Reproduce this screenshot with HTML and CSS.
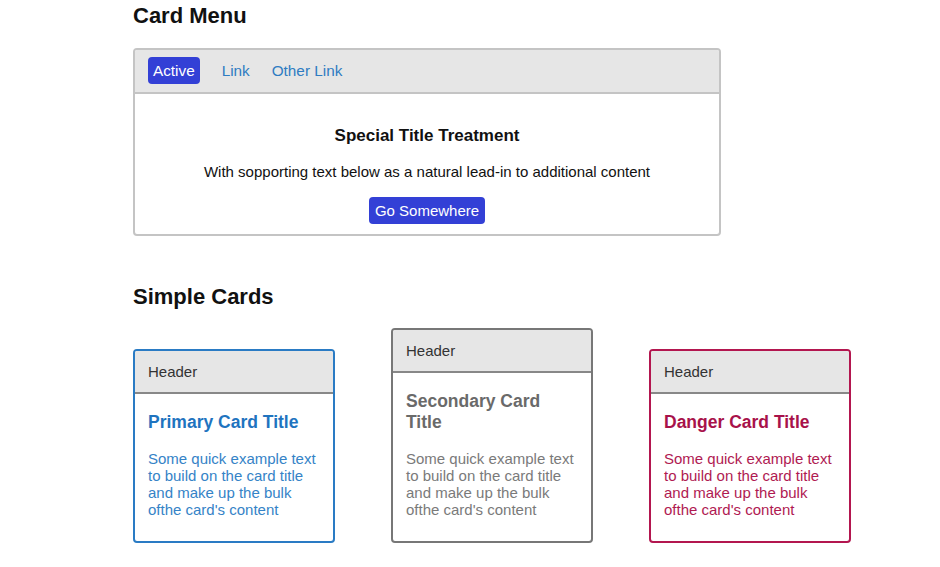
FILE: index.html
```html
<!DOCTYPE html>
<html>
<head>
<meta charset="utf-8">
<link rel="stylesheet" href="styles.css">
</head>
<body>
<main class="page">
  <h2 class="section-title">Card Menu</h2>
  <div class="menu-card">
    <nav class="menu-head">
      <a class="tab active">Active</a>
      <a class="tab">Link</a>
      <a class="tab">Other Link</a>
    </nav>
    <div class="menu-body">
      <h3 class="menu-title">Special Title Treatment</h3>
      <p class="menu-text">With sopporting text below as a natural lead-in to additional content</p>
      <a class="btn">Go Somewhere</a>
    </div>
  </div>

  <h2 class="section-title simple">Simple Cards</h2>
  <div class="cards">
    <div class="card primary">
      <div class="card-head">Header</div>
      <div class="card-body">
        <h4 class="card-title">Primary Card Title</h4>
        <p class="card-text">Some quick example text to build on the card title and make up the bulk ofthe card's content</p>
      </div>
    </div>
    <div class="card secondary">
      <div class="card-head">Header</div>
      <div class="card-body">
        <h4 class="card-title">Secondary Card Title</h4>
        <p class="card-text">Some quick example text to build on the card title and make up the bulk ofthe card's content</p>
      </div>
    </div>
    <div class="card danger">
      <div class="card-head">Header</div>
      <div class="card-body">
        <h4 class="card-title">Danger Card Title</h4>
        <p class="card-text">Some quick example text to build on the card title and make up the bulk ofthe card's content</p>
      </div>
    </div>
  </div>
</main>
</body>
</html>
```

FILE: styles.css
```css
* { box-sizing: border-box; }
body {
  margin: 0;
  background: #fff;
  font-family: "Liberation Sans", Arial, sans-serif;
  color: #111;
}
.page {
  padding: 3px 0 0 133px;
}
.section-title {
  margin: 0;
  font-size: 22px;
  line-height: 26px;
  font-weight: bold;
  color: #111;
}
.menu-card {
  width: 588px;
  margin-top: 19px;
  border: 2px solid #c4c4c4;
  border-radius: 4px;
  overflow: hidden;
}
.menu-head {
  display: flex;
  align-items: center;
  gap: 4px;
  height: 44px;
  padding: 0 13px 1px;
  background: #e6e6e6;
  border-bottom: 2px solid #c4c4c4;
}
.tab {
  font-size: 15.3px;
  line-height: 27px;
  padding: 0 5px;
  color: #2f7cc2;
  border-radius: 4px;
  margin-right: 8px;
}
.tab.active {
  background: #3340d6;
  color: #fff;
  margin-right: 13px;
}
.menu-body {
  text-align: center;
  padding: 32px 20px 10px;
}
.menu-title {
  margin: 0;
  font-size: 17px;
  line-height: 20px;
  font-weight: bold;
  color: #111;
}
.menu-text {
  margin: 17px 0 0;
  font-size: 15px;
  line-height: 18px;
  color: #111;
}
.btn {
  display: inline-block;
  margin-top: 16px;
  padding: 0 6px;
  font-size: 15px;
  line-height: 27px;
  background: #3340d6;
  color: #fff;
  border-radius: 4px;
}
.simple {
  margin-top: 48px;
}
.cards {
  display: flex;
  align-items: flex-end;
  gap: 56px;
  margin-top: 18px;
}
.card {
  width: 202px;
  border: 2px solid;
  border-radius: 4px;
  overflow: hidden;
}
.card-head {
  height: 43px;
  padding: 0 13px;
  display: flex;
  align-items: center;
  font-size: 15px;
  color: #333;
  background: #e6e6e6;
  border-bottom: 2px solid #888;
}
.card-body {
  padding: 18px 13px 23px;
}
.card-title {
  margin: 0;
  font-size: 17.5px;
  line-height: 21px;
  font-weight: bold;
}
.card-text {
  margin: 17px 0 0;
  font-size: 15px;
  line-height: 17px;
}
.primary { border-color: #2a7bc4; }
.primary .card-title { color: #1f74bf; }
.primary .card-text { color: #3583c7; }
.secondary { border-color: #777; }
.secondary .card-title { color: #6a6a6a; }
.secondary .card-text { color: #7a7a7a; }
.danger { border-color: #b3164f; }
.danger .card-title { color: #a8124a; }
.danger .card-text { color: #b01a52; }
```
